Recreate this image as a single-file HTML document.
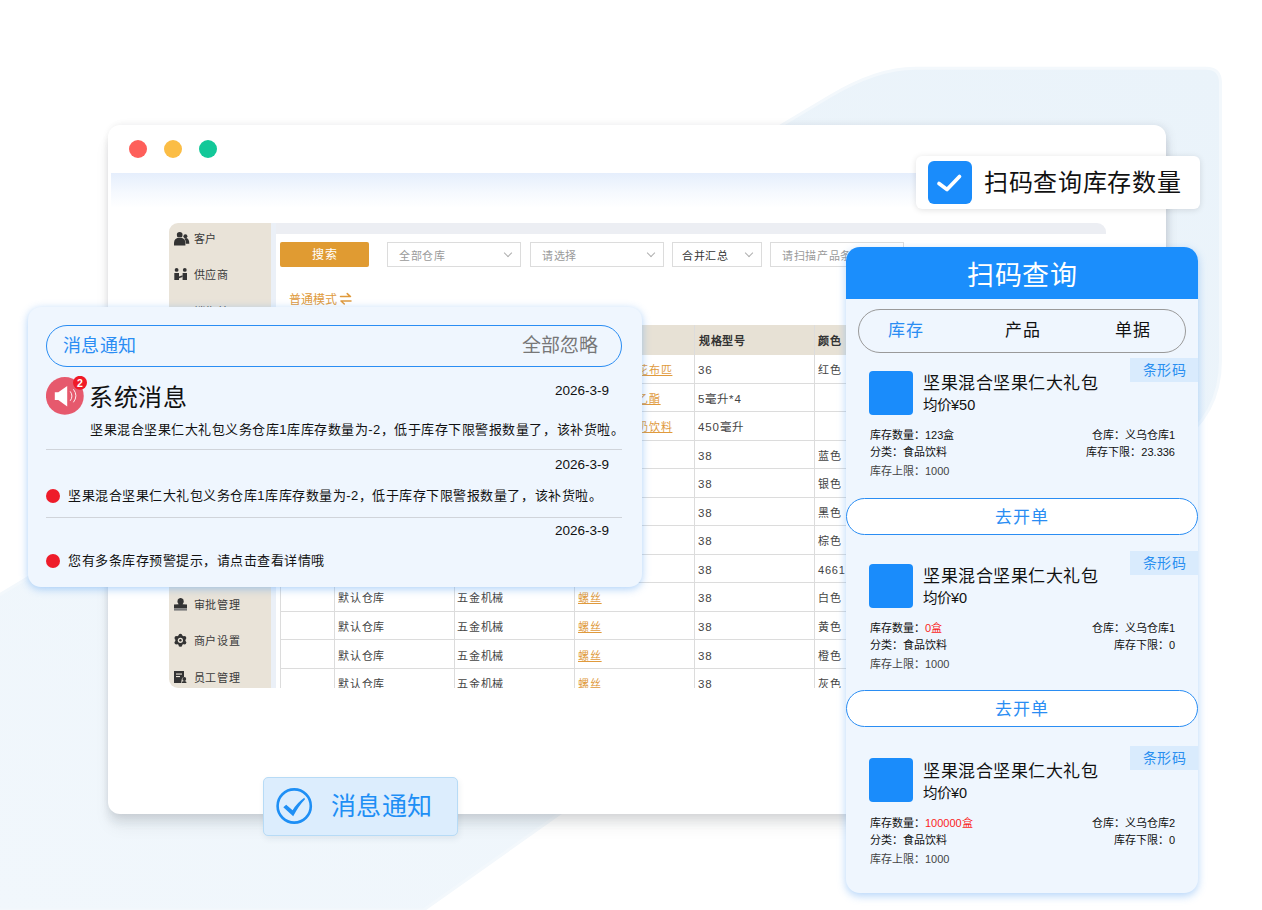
<!DOCTYPE html>
<html lang="zh-CN"><head><meta charset="utf-8">
<style>
*{box-sizing:border-box;margin:0;padding:0}
html,body{width:1262px;height:910px;overflow:hidden;background:#fff}
body{position:relative;font-family:"Liberation Sans",sans-serif;color:#222}
.abs{position:absolute}
#bg{position:absolute;left:0;top:0}
/* browser window */
#win{position:absolute;left:108px;top:124.5px;width:1058px;height:689.5px;background:#fff;border-radius:12px;
 box-shadow:0 9px 9px rgba(20,30,40,0.08),0 14px 16px rgba(20,30,40,0.05),4px 0 10px rgba(30,40,60,0.05),0 0 7px rgba(0,0,0,0.05)}
.dot{position:absolute;width:18px;height:18px;border-radius:50%;top:140px}
#band{position:absolute;left:110.5px;top:173px;width:1053px;height:35px;background:linear-gradient(#e5eefc,#f5f9fe 55%,#fff)}
#side{position:absolute;left:169px;top:223px;width:102px;height:465px;background:#e9e3d8;border-radius:9px 0 0 9px}
#gstrip{position:absolute;left:271px;top:223px;width:835px;height:11px;background:#eceef3;border-radius:0 9px 0 0}
#lstrip{position:absolute;left:271px;top:223px;width:5px;height:465px;background:#ebf0f7}
#content{position:absolute;left:276px;top:234px;width:830px;height:454px;background:#fff}
.mi{position:absolute;left:173.5px;height:18px;font-size:11px;letter-spacing:0.75px;line-height:19px;color:#3a3a3a;white-space:nowrap}
.mi .ico{position:absolute;left:0;top:2px;width:16px;height:16px;overflow:visible}
.mi span{position:absolute;left:20px;top:0}
#btnsearch{position:absolute;left:280px;top:242px;width:89px;height:25px;background:#e09b32;border-radius:2px;color:#fff;font-size:12px;letter-spacing:0.5px;text-indent:0.5px;line-height:26px;text-align:center}
.sel{position:absolute;top:242px;height:25px;border:1px solid #dcdcdc;background:#fff;font-size:11px;letter-spacing:0.7px;line-height:26px;color:#9a9a9a;padding-left:11px;white-space:nowrap;overflow:hidden}
.sel .arr{position:absolute;right:9px;top:7px;width:6px;height:6px;border-right:1px solid #b0b0b0;border-bottom:1px solid #b0b0b0;transform:rotate(45deg)}
#mode{position:absolute;left:289px;top:291px;font-size:12px;line-height:18px;color:#e09a3c}
/* table */
#thead{position:absolute;left:280px;top:325px;width:826px;height:30px;background:#e7e1d5}
#thead span{position:absolute;top:0;line-height:33px;font-size:11px;letter-spacing:0.5px;font-weight:bold;color:#333}
.tr{position:absolute;left:280px;width:826px;height:28.55px;border-bottom:1px solid #dcdcdc;font-size:11px;letter-spacing:0.8px;color:#444;white-space:nowrap}
.tr span{position:absolute;top:0;line-height:31px}
.c2{left:58px}.c3{left:177px}.c4{left:298px;color:#e09a3c;text-decoration:underline}.c5{left:418px;font-size:11.5px;letter-spacing:0.9px}.c6{left:538px}
#vlines div{position:absolute;top:325px;height:363px;width:1px;background:#dcdcdc}
/* message panel */
#msg{position:absolute;left:28px;top:307px;width:614px;height:280px;background:#eff6fe;border-radius:13px;
 box-shadow:0 2px 8px rgba(70,150,240,0.45)}
#cap{position:absolute;left:46px;top:325px;width:576px;height:42px;border:1.5px solid #2a8df3;border-radius:21px}
#cap .l{position:absolute;left:16px;top:0;line-height:40px;font-size:18px;letter-spacing:0.4px;color:#2a8df3}
#cap .r{position:absolute;right:23px;top:0;line-height:39px;font-size:19px;color:#777}
#spk{position:absolute;left:46px;top:377px;width:38px;height:38px;border-radius:50%;background:#e6586c}
#badge{position:absolute;left:72.5px;top:376px;width:14px;height:14px;border-radius:50%;background:#f0202e;color:#fff;font-size:10px;line-height:14px;text-align:center;font-weight:bold}
#systitle{position:absolute;left:89px;top:383px;font-size:24px;letter-spacing:0.5px;line-height:30px;color:#111}
.date{position:absolute;left:520px;width:89px;text-align:right;font-size:13.5px;line-height:18px;color:#111}
.mtxt{position:absolute;font-size:13px;letter-spacing:0.52px;line-height:18px;color:#111;white-space:nowrap}
.hr{position:absolute;left:46px;width:576px;height:1px;background:#d0d4da}
.rdot{position:absolute;left:46px;width:14px;height:14px;border-radius:50%;background:#ee1c2a}
/* scan label */
#slabel{position:absolute;left:916px;top:156px;width:284px;height:53px;background:#fff;border-radius:6px;box-shadow:0 1px 6px rgba(0,0,0,0.12)}
#chk{position:absolute;left:928px;top:161px;width:44px;height:43px;border-radius:6px;background:#1a8cfb}
#slabel .t{position:absolute;left:68px;top:0;line-height:53px;font-size:24px;letter-spacing:0.7px;color:#111;white-space:nowrap}
/* phone */
#phone{position:absolute;left:846px;top:247px;width:352px;height:646px;background:#eff6fe;border-radius:14px;
 box-shadow:0 3px 8px rgba(70,150,240,0.40)}
#phead{position:absolute;left:846px;top:247px;width:352px;height:52px;background:#1b8efc;border-radius:14px 14px 0 0;color:#fff;font-size:27px;letter-spacing:0.4px;text-indent:0.4px;line-height:58px;text-align:center}
#tabs{position:absolute;left:858px;top:309px;width:328px;height:44px;border:1px solid #9a9a9a;border-radius:22px;font-size:17px;letter-spacing:0.5px}
#tabs span{position:absolute;top:0;line-height:42px;color:#111}
.card{position:absolute;left:846px;width:352px;height:140px}
.card .tag{position:absolute;left:284px;top:0;width:68px;height:24px;background:#d9ebfd;color:#2a8ff0;font-size:14px;letter-spacing:0.3px;line-height:24px;padding-left:13px}
.card .sq{position:absolute;left:22.5px;top:12.5px;width:44px;height:44px;background:#1a8cfb;border-radius:4px}
.card .ttl{position:absolute;left:77px;top:14px;font-size:17px;letter-spacing:0.55px;line-height:24px;color:#111;white-space:nowrap}
.card .price{position:absolute;left:77px;top:37px;font-size:14.5px;line-height:20px;color:#111;white-space:nowrap}
.card .inf{position:absolute;font-size:11px;line-height:16px;color:#111;white-space:nowrap}
.card .l1{left:24px;top:69px}.card .l2{left:24px;top:86px}.card .l3{left:24px;top:105px;color:#444}
.card .r1{right:23px;top:69px}.card .r2{right:23px;top:86px}
.red{color:#fa1e1e}
.btn{position:absolute;left:846px;width:352px;height:37px;border:1.3px solid #2a8df3;border-radius:19px;background:#fff;color:#2a8df3;font-size:17px;letter-spacing:0.7px;line-height:38px;text-align:center}
/* msg label */
#mlabel{position:absolute;left:263px;top:777px;width:195px;height:59px;background:#dcedfd;border:1px solid #b7dbf6;border-radius:5px;box-shadow:1px 3px 6px rgba(40,60,90,0.08)}
#mlabel .t{position:absolute;left:67px;top:0;line-height:57px;font-size:25px;letter-spacing:0.4px;color:#1e8ff5;white-space:nowrap}
</style></head><body>
<svg id="bg" width="1262" height="910" viewBox="0 0 1262 910">
 <defs>
  <linearGradient id="g1" x1="0" y1="1" x2="1" y2="0">
   <stop offset="0" stop-color="#f1f7fc"/>
   <stop offset="1" stop-color="#eaf3fa"/>
  </linearGradient>
 </defs>
 <path d="M 915,68.3 L 1206,68.3 Q 1220.5,68.3 1220.5,83 L 1220.5,360 Q 1220.5,416.4 1174,445.2 L 558.8,814.3 L 423.7,910 L -10,910 L -10,600.5 L 830,96.3 Q 877,68.3 915,68.3 Z" fill="url(#g1)" stroke="#f3f8fc" stroke-width="3"/>
</svg>

<div id="win"></div>
<div class="dot" style="left:129px;background:#fe5f5a"></div>
<div class="dot" style="left:164px;background:#fbbd45"></div>
<div class="dot" style="left:199px;background:#13c899"></div>
<div id="band"></div>

<div id="side"></div>
<div id="gstrip"></div>
<div id="lstrip"></div>
<div id="content"></div>
<div class="mi" style="top:229.5px"><svg class="ico" width="16" height="16" viewBox="0 0 16 16"><circle cx="11.4" cy="4.3" r="2" fill="#333"/><path d="M9.5,7.6 Q10.5,6.1 12.2,6.1 Q15.3,6.6 15.3,11.8 L11,11.8 Z" fill="#333"/><circle cx="5.7" cy="2.9" r="3.3" fill="#e9e3d8"/><circle cx="5.7" cy="2.9" r="2.85" fill="#333"/><path d="M0,13.4 L0,10.5 Q0.3,5.8 5.7,5.7 Q11.2,5.8 11.4,10.5 L11.4,13.4 Z" fill="#e9e3d8" stroke="#e9e3d8" stroke-width="0.8"/><path d="M0,13.4 L0,10.5 Q0.3,5.8 5.7,5.7 Q11.2,5.8 11.4,10.5 L11.4,13.4 Z" fill="#333"/></svg><span>客户</span></div>
<div class="mi" style="top:266.1px"><svg class="ico" width="16" height="16" viewBox="0 0 16 16"><circle cx="2.6" cy="1.9" r="1.9" fill="#333"/><circle cx="10.8" cy="1.9" r="1.9" fill="#333"/><path d="M0.3,5 L5,5 L5,12 L0.3,12 Z" fill="#333"/><path d="M8.6,5 L13,5 L13,12 L8.6,12 Z" fill="#333"/><path d="M5,8.5 L8.6,7.2 L8.6,9 L5,10.2 Z" fill="#333"/></svg><span>供应商</span></div>
<div class="mi" style="top:302.7px"><svg class="ico" width="16" height="16" viewBox="0 0 16 16"><rect x="1" y="2" width="11" height="12" rx="1" fill="#333"/></svg><span>销售单</span></div>
<div class="mi" style="top:339.3px"><svg class="ico" width="16" height="16" viewBox="0 0 16 16"><rect x="1" y="2" width="11" height="12" rx="1" fill="#333"/></svg><span>采购单</span></div>
<div class="mi" style="top:375.9px"><svg class="ico" width="16" height="16" viewBox="0 0 16 16"><rect x="1" y="2" width="11" height="12" rx="1" fill="#333"/></svg><span>库存管理</span></div>
<div class="mi" style="top:412.5px"><svg class="ico" width="16" height="16" viewBox="0 0 16 16"><rect x="1" y="2" width="11" height="12" rx="1" fill="#333"/></svg><span>财务管理</span></div>
<div class="mi" style="top:449.1px"><svg class="ico" width="16" height="16" viewBox="0 0 16 16"><rect x="1" y="2" width="11" height="12" rx="1" fill="#333"/></svg><span>报表中心</span></div>
<div class="mi" style="top:485.7px"><svg class="ico" width="16" height="16" viewBox="0 0 16 16"><rect x="1" y="2" width="11" height="12" rx="1" fill="#333"/></svg><span>数据统计</span></div>
<div class="mi" style="top:522.3px"><svg class="ico" width="16" height="16" viewBox="0 0 16 16"><rect x="1" y="2" width="11" height="12" rx="1" fill="#333"/></svg><span>系统设置</span></div>
<div class="mi" style="top:558.9px"><svg class="ico" width="16" height="16" viewBox="0 0 16 16"><rect x="1" y="2" width="11" height="12" rx="1" fill="#333"/></svg><span>消息中心</span></div>
<div class="mi" style="top:595.5px"><svg class="ico" width="16" height="16" viewBox="0 0 16 16"><path d="M4.6,6.3 Q2.6,4.2 3.8,1.6 Q4.9,-0.2 6.6,-0.1 Q8.3,-0.2 9.4,1.6 Q10.6,4.2 8.6,6.3 L13,6.6 L13,10.2 L0,10.2 L0,6.6 Z" fill="#333"/><rect x="0" y="10.3" width="13" height="2.3" fill="#7a7a7a"/></svg><span>审批管理</span></div>
<div class="mi" style="top:632.1px"><svg class="ico" width="16" height="16" viewBox="0 0 16 16"><g transform="translate(6.4,6.3)"><circle r="5" fill="#333"/><circle cx="0" cy="-4.6" r="1.9" fill="#333"/><circle cx="4" cy="-2.3" r="1.9" fill="#333"/><circle cx="4" cy="2.3" r="1.9" fill="#333"/><circle cx="0" cy="4.6" r="1.9" fill="#333"/><circle cx="-4" cy="2.3" r="1.9" fill="#333"/><circle cx="-4" cy="-2.3" r="1.9" fill="#333"/><circle r="2.6" fill="#e9e3d8"/><circle r="1.2" fill="#333"/></g></svg><span>商户设置</span></div>
<div class="mi" style="top:668.7px"><svg class="ico" width="16" height="16" viewBox="0 0 16 16"><path d="M0,0 L10,0 L10,6 Q7.5,6.5 7.6,9 L7.2,12.1 L0,12.1 Z" fill="#333"/><rect x="2" y="2.5" width="6" height="1.1" fill="#e9e3d8"/><rect x="2" y="5" width="4" height="1.1" fill="#e9e3d8"/><circle cx="10.3" cy="8" r="1.9" fill="#333"/><path d="M7.6,12.1 Q7.8,9.8 10.3,9.9 Q12.6,9.9 12.6,12.1 Z" fill="#333"/></svg><span>员工管理</span></div>
<div id="btnsearch">搜索</div>
<div class="sel" style="left:387px;width:134px">全部仓库<i class="arr"></i></div>
<div class="sel" style="left:530px;width:134px">请选择<i class="arr"></i></div>
<div class="sel" style="left:672px;width:90px;color:#333;padding-left:9px">合并汇总<i class="arr"></i></div>
<div class="sel" style="left:770px;width:134px">请扫描产品条码</div>
<div id="mode">普通模式</div>
<svg class="abs" style="left:339px;top:292px" width="14" height="14" viewBox="0 0 14 14"><path d="M1.5,4.6 L11.5,4.6 L8.2,1.6 M12,9 L2,9 L5.3,12" fill="none" stroke="#e09a3c" stroke-width="1.5" stroke-linecap="round" stroke-linejoin="round"/></svg>

<div id="tclip" style="position:absolute;left:0;top:0;width:1262px;height:688px;overflow:hidden">
<div id="thead"><span style="left:58px">仓库</span><span style="left:178px">分类</span><span style="left:298px">产品名称</span><span style="left:419px">规格型号</span><span style="left:538px">颜色</span></div>
<div class="tr" style="top:355.00px"><span class="c2">默认仓库</span><span class="c3">纺织面料</span><span class="c4">全棉斜纹印花布匹</span><span class="c5">36</span><span class="c6">红色</span></div>
<div class="tr" style="top:383.55px"><span class="c2">默认仓库</span><span class="c3">化工原料</span><span class="c4">乙二醇乙酸乙酯</span><span class="c5">5毫升*4</span><span class="c6"></span></div>
<div class="tr" style="top:412.10px"><span class="c2">默认仓库</span><span class="c3">食品饮料</span><span class="c4">伊利优酸乳奶饮料</span><span class="c5">450毫升</span><span class="c6"></span></div>
<div class="tr" style="top:440.65px"><span class="c2">默认仓库</span><span class="c3">五金机械</span><span class="c4">螺丝</span><span class="c5">38</span><span class="c6">蓝色</span></div>
<div class="tr" style="top:469.20px"><span class="c2">默认仓库</span><span class="c3">五金机械</span><span class="c4">螺丝</span><span class="c5">38</span><span class="c6">银色</span></div>
<div class="tr" style="top:497.75px"><span class="c2">默认仓库</span><span class="c3">五金机械</span><span class="c4">螺丝</span><span class="c5">38</span><span class="c6">黑色</span></div>
<div class="tr" style="top:526.30px"><span class="c2">默认仓库</span><span class="c3">五金机械</span><span class="c4">螺丝</span><span class="c5">38</span><span class="c6">棕色</span></div>
<div class="tr" style="top:554.85px"><span class="c2">默认仓库</span><span class="c3">五金机械</span><span class="c4">螺丝</span><span class="c5">38</span><span class="c6">4661</span></div>
<div class="tr" style="top:583.40px"><span class="c2">默认仓库</span><span class="c3">五金机械</span><span class="c4">螺丝</span><span class="c5">38</span><span class="c6">白色</span></div>
<div class="tr" style="top:611.95px"><span class="c2">默认仓库</span><span class="c3">五金机械</span><span class="c4">螺丝</span><span class="c5">38</span><span class="c6">黄色</span></div>
<div class="tr" style="top:640.50px"><span class="c2">默认仓库</span><span class="c3">五金机械</span><span class="c4">螺丝</span><span class="c5">38</span><span class="c6">橙色</span></div>
<div class="tr" style="top:669.05px"><span class="c2">默认仓库</span><span class="c3">五金机械</span><span class="c4">螺丝</span><span class="c5">38</span><span class="c6">灰色</span></div>
<div id="vlines"><div style="left:280px"></div><div style="left:334px"></div><div style="left:454px"></div><div style="left:574px"></div><div style="left:694px"></div><div style="left:814px"></div><div style="left:934px"></div></div>

</div>
<div id="msg"></div>
<div id="cap"><span class="l">消息通知</span><span class="r">全部忽略</span></div>
<svg class="abs" style="left:46px;top:376px" width="42" height="42" viewBox="0 0 42 42">
<circle cx="18.85" cy="19.9" r="18.9" fill="#e6596d"/>
<path d="M8.8,16.3 L12.3,16.3 L21.2,9.9 L21.2,30.5 L12.3,24 L8.8,24 Z" fill="#fff"/>
<path d="M24.2,15.4 Q27.6,20.1 24.2,24.8" fill="none" stroke="#fff" stroke-width="0.9"/>
<path d="M27.4,13.2 Q32.4,19.75 27.4,26.3" fill="none" stroke="#fff" stroke-width="0.9"/>
<circle cx="34" cy="6.8" r="7" fill="#f01a27"/>
<text x="34" y="10.6" font-size="10.5" font-weight="bold" fill="#fff" text-anchor="middle" font-family="Liberation Sans">2</text>
</svg>
<div id="systitle">系统消息</div>
<div class="date" style="top:382px">2026-3-9</div>
<div class="mtxt" style="left:90px;top:421px">坚果混合坚果仁大礼包义务仓库1库库存数量为-2，低于库存下限警报数量了，该补货啦。</div>
<div class="hr" style="top:449px"></div>
<div class="date" style="top:456px">2026-3-9</div>
<div class="rdot" style="top:489px"></div>
<div class="mtxt" style="left:68px;top:487px">坚果混合坚果仁大礼包义务仓库1库库存数量为-2，低于库存下限警报数量了，该补货啦。</div>
<div class="hr" style="top:517px"></div>
<div class="date" style="top:522px">2026-3-9</div>
<div class="rdot" style="top:554px"></div>
<div class="mtxt" style="left:68px;top:552px">您有多条库存预警提示，请点击查看详情哦</div>

<div id="slabel"><span class="t">扫码查询库存数量</span></div>
<div id="chk"></div>
<svg class="abs" style="left:928px;top:161px" width="44" height="43" viewBox="0 0 44 43"><path d="M11,22.5 L19,28.5 L31.5,15.5" fill="none" stroke="#fff" stroke-width="3.7" stroke-linecap="round" stroke-linejoin="round"/></svg>

<div id="phone"></div>
<div id="phead">扫码查询</div>
<div id="tabs"><span style="left:29px;color:#2a8df3">库存</span><span style="left:146px">产品</span><span style="left:256px">单据</span></div>
<div class="card" style="top:358.3px">
<div class="tag">条形码</div>
<div class="sq"></div>
<div class="ttl">坚果混合坚果仁大礼包</div>
<div class="price">均价¥50</div>
<div class="inf l1">库存数量：<span>123盒</span></div>
<div class="inf r1">仓库：义乌仓库1</div>
<div class="inf l2">分类：食品饮料</div>
<div class="inf r2">库存下限：23.336</div>
<div class="inf l3">库存上限：1000</div>
</div>
<div class="btn" style="top:498.4px">去开单</div>
<div class="card" style="top:551.3px">
<div class="tag">条形码</div>
<div class="sq"></div>
<div class="ttl">坚果混合坚果仁大礼包</div>
<div class="price">均价¥0</div>
<div class="inf l1">库存数量：<span class="red">0盒</span></div>
<div class="inf r1">仓库：义乌仓库1</div>
<div class="inf l2">分类：食品饮料</div>
<div class="inf r2">库存下限：0</div>
<div class="inf l3">库存上限：1000</div>
</div>
<div class="btn" style="top:690.4px">去开单</div>
<div class="card" style="top:745.8px">
<div class="tag">条形码</div>
<div class="sq"></div>
<div class="ttl">坚果混合坚果仁大礼包</div>
<div class="price">均价¥0</div>
<div class="inf l1">库存数量：<span class="red">100000盒</span></div>
<div class="inf r1">仓库：义乌仓库2</div>
<div class="inf l2">分类：食品饮料</div>
<div class="inf r2">库存下限：0</div>
<div class="inf l3">库存上限：1000</div>
</div>

<div id="mlabel"><span class="t">消息通知</span></div>
<svg class="abs" style="left:275px;top:787px" width="38" height="38" viewBox="0 0 38 38">
<circle cx="19.2" cy="19" r="16.6" fill="none" stroke="#1e8ff5" stroke-width="2.6"/>
<path d="M8.3,20.3 L11.2,17.8 L17.6,23.3 Q22,15.8 29.3,10.8 L30,12.2 Q23.6,18.8 18.2,29.3 Z" fill="#1e8ff5"/>
</svg>
</body></html>
